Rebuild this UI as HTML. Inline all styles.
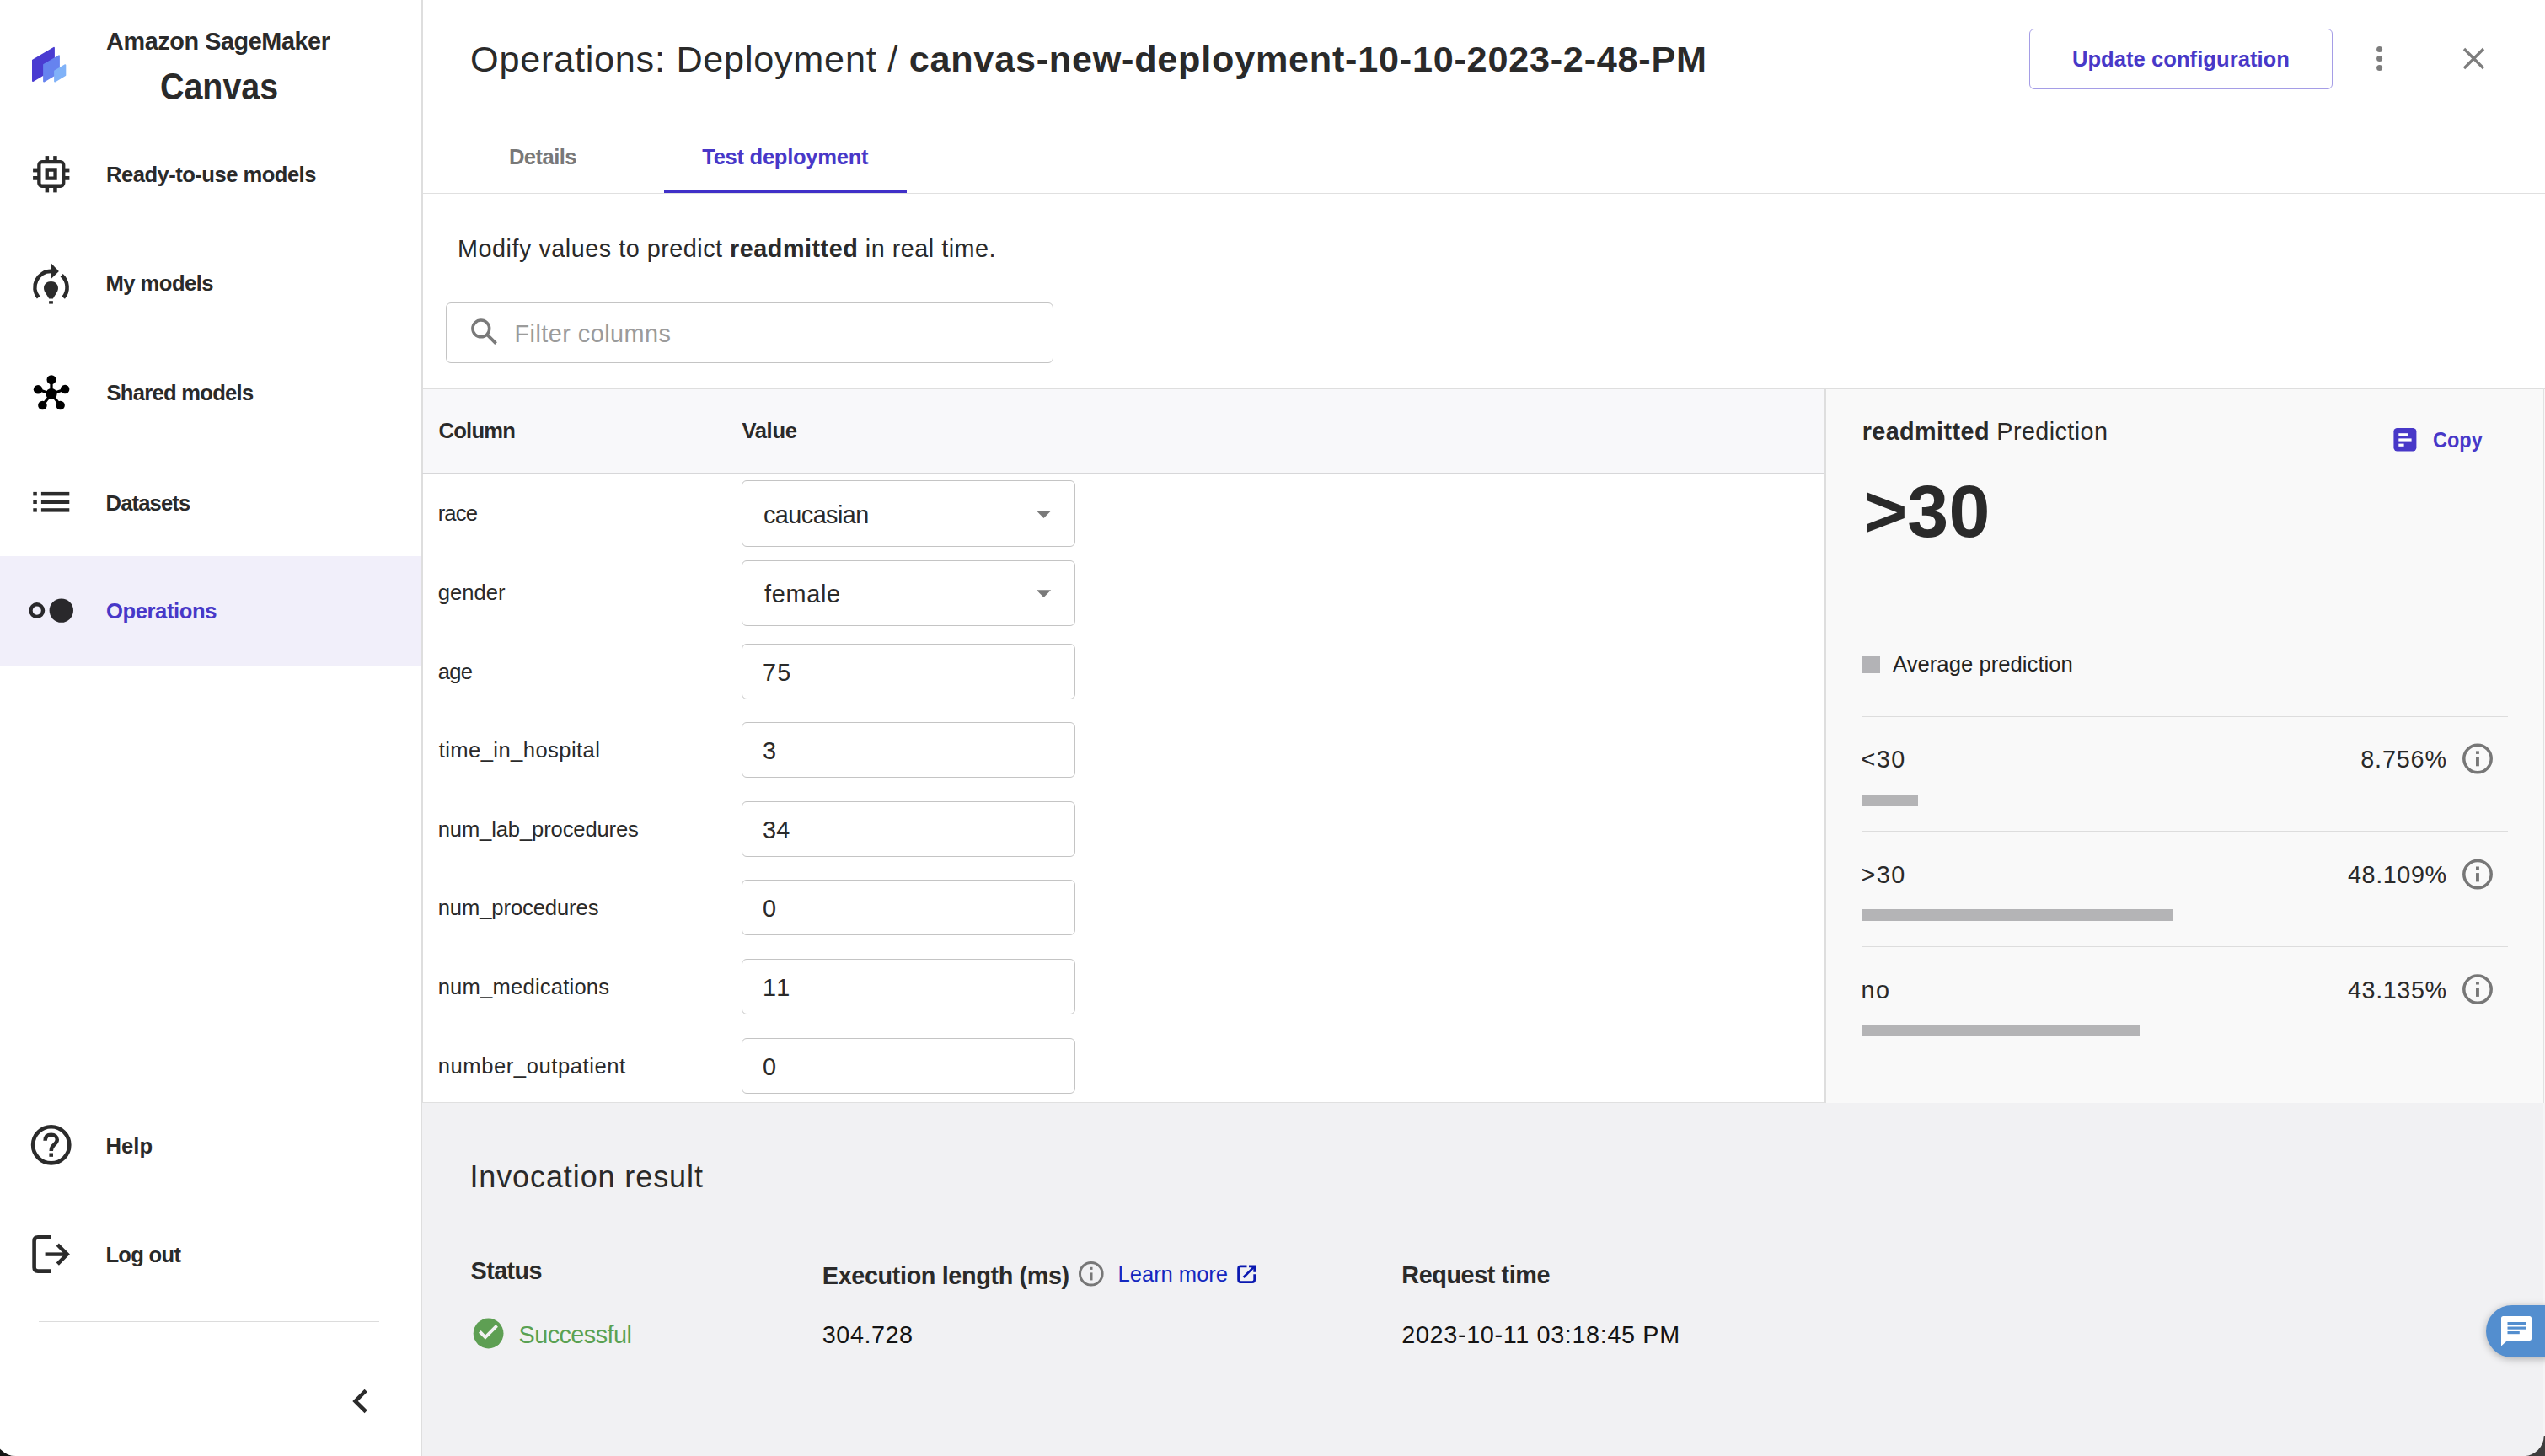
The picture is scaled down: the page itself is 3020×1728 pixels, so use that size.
<!DOCTYPE html><html><head><meta charset='utf-8'><style>
*{margin:0;padding:0;box-sizing:border-box}
html,body{width:3020px;height:1728px;overflow:hidden;background:#fff}
body{position:relative;font-family:"Liberation Sans",sans-serif;color:#2a2a2a}
.a{position:absolute}
.t{position:absolute;white-space:nowrap;line-height:1;font-family:"Liberation Sans",sans-serif}
.t b{font-weight:700}
.box{position:absolute;border:1px solid #c4c4c4;border-radius:6px;background:#fff}
</style></head><body>
<!-- backgrounds -->
<div class="a" style="left:0;top:660px;width:500px;height:130px;background:#f1effa"></div>
<div class="a" style="left:500px;top:0;width:2px;height:1728px;background:#dedede"></div>
<div class="a" style="left:502px;top:142px;width:2520px;height:1px;background:#e0e0e0"></div>
<div class="a" style="left:502px;top:229px;width:2520px;height:1px;background:#e0e0e0"></div>
<div class="a" style="left:788px;top:226px;width:288px;height:3px;background:#4030c8"></div>
<!-- filter input -->
<div class="box" style="left:529px;top:359px;width:721px;height:72px"></div>
<!-- table area -->
<div class="a" style="left:502px;top:460px;width:2520px;height:2px;background:#dedede"></div>
<div class="a" style="left:502px;top:462px;width:1663px;height:99px;background:#f8f8fa"></div>
<div class="a" style="left:501px;top:561px;width:1664px;height:2px;background:#d7d7d9"></div>
<div class="a" style="left:2165px;top:462px;width:855px;height:847px;background:#f9f9f9"></div>
<div class="a" style="left:2165px;top:462px;width:1.5px;height:847px;background:#dedede"></div>
<div class="a" style="left:501px;top:1309px;width:2520px;height:419px;background:#f1f1f3"></div>
<div class="a" style="left:501px;top:1308px;width:1664px;height:1px;background:#e0e0e0"></div>
<div class="a" style="left:3018px;top:461px;width:1px;height:848px;background:#e2e2e2"></div>
<div class="a" style="left:3018px;top:1309px;width:2px;height:419px;background:#f5f5f6"></div>
<!-- selects and inputs -->
<div class="box" style="left:880px;top:570px;width:396px;height:79px"></div>
<div class="box" style="left:880px;top:665px;width:396px;height:78px"></div>
<div class="box" style="left:880px;top:764px;width:396px;height:66px"></div>
<div class="box" style="left:880px;top:857px;width:396px;height:66px"></div>
<div class="box" style="left:880px;top:951px;width:396px;height:66px"></div>
<div class="box" style="left:880px;top:1044px;width:396px;height:66px"></div>
<div class="box" style="left:880px;top:1138px;width:396px;height:66px"></div>
<div class="box" style="left:880px;top:1232px;width:396px;height:66px"></div>
<!-- update config button -->
<div class="a" style="left:2408px;top:34px;width:360px;height:72px;border:1px solid #a59de6;border-radius:6px"></div>
<!-- prediction dividers & bars -->
<div class="a" style="left:2209px;top:849.6px;width:767px;height:1.6px;background:#dddddd"></div>
<div class="a" style="left:2209px;top:985.5px;width:767px;height:1.6px;background:#dddddd"></div>
<div class="a" style="left:2209px;top:1122.7px;width:767px;height:1.6px;background:#dddddd"></div>
<div class="a" style="left:2209px;top:778px;width:22px;height:20.8px;background:#b3b3b6"></div>
<div class="a" style="left:2209px;top:943px;width:66.9px;height:13.9px;background:#b4b4b6"></div>
<div class="a" style="left:2209px;top:1079.3px;width:369px;height:14.2px;background:#b4b4b6"></div>
<div class="a" style="left:2209px;top:1216.2px;width:331px;height:13.5px;background:#b4b4b6"></div>
<!-- sidebar divider -->
<div class="a" style="left:46px;top:1567.6px;width:404px;height:1.6px;background:#dcdcdc"></div>
<!-- chat button -->
<div class="a" style="left:2950px;top:1549.3px;width:100px;height:61.3px;border-radius:31px;background:#538ecf;box-shadow:0 2px 10px rgba(0,0,0,0.28)"></div>
<!-- window corners -->
<svg class="a" style="left:0;top:0" width="3020" height="1728">
<path d="M-5.9 1703.6 A24.4 24.4 0 0 0 18.5 1728 L-6 1728 Z" fill="#151515"/>
<path d="M3018.7 1704 A24.1 24.1 0 0 1 2994.6 1728.1 L3021 1728.1 L3021 1704 Z" fill="#3d3d3d"/>
</svg>

<svg class="a" style="left:0;top:0" width="3020" height="1728" viewBox="0 0 3020 1728">
 <!-- logo -->
 <polygon points="38.9,71.6 64.0,56.8 64.0,81.3 38.9,96.1" fill="#4a3bd1" stroke="#4a3bd1" stroke-width="1.8" stroke-linejoin="round"/>
 <polygon points="52.0,76.8 70.0,66.2 70.0,86.0 52.0,96.6" fill="#6683ef" stroke="#6683ef" stroke-width="1.8" stroke-linejoin="round"/>
 <polygon points="65.0,84.4 77.4,77.1 77.4,89.3 65.0,96.6" fill="#80b2f8" stroke="#80b2f8" stroke-width="1.8" stroke-linejoin="round"/>
 <!-- chip icon -->
 <g fill="none" stroke="#2b2b2b" stroke-width="4.3">
  <rect x="46.35" y="192.15" width="28.9" height="28.6" rx="3.5"/>
 </g>
 <g fill="#2b2b2b">
  <path d="M53.6 199.3 H67.7 V213.75 H53.6 Z M57.9 203.7 V209.4 H63.4 V203.7 Z" fill-rule="evenodd"/>
  <rect x="53.6" y="185.1" width="4.5" height="6"/><rect x="63.2" y="185.1" width="4.5" height="6"/>
  <rect x="53.6" y="222" width="4.5" height="6.4"/><rect x="63.2" y="222" width="4.5" height="6.4"/>
  <rect x="39.1" y="199.6" width="6" height="4.8"/><rect x="39.1" y="209.0" width="6" height="4.75"/>
  <rect x="76.5" y="199.6" width="5.9" height="4.8"/><rect x="76.5" y="209.0" width="5.9" height="4.75"/>
 </g>
 <!-- my models icon -->
 <g fill="none" stroke="#2b2b2b" stroke-width="4.6">
  <path d="M45.67 353.04 A19.1 19.1 0 0 1 60.5 321.9"/>
  <path d="M73.16 326.7 A19.1 19.1 0 0 1 75.17 353.23"/>
 </g>
 <g fill="#2b2b2b">
  <path d="M60.3 312 L69.9 322.1 L60.3 331.3 Z"/>
  <path d="M60.5 334 C65.5 334 69 337.5 69 342 C69 344.5 67.8 346.5 66.5 348.5 L62.8 354.6 H58.2 L54.5 348.5 C53.2 346.5 52 344.5 52 342 C52 337.5 55.5 334 60.5 334 Z"/>
  <rect x="58.1" y="357.2" width="4.8" height="3.4"/>
 </g>
 <!-- shared models icon -->
 <g stroke="#000" stroke-width="3.3">
  <line x1="61" y1="467.5" x2="61" y2="450.7"/><line x1="61" y1="467.5" x2="45.1" y2="462.2"/>
  <line x1="61" y1="467.5" x2="77.1" y2="462"/><line x1="61" y1="467.5" x2="50.4" y2="481"/>
  <line x1="61" y1="467.5" x2="71.6" y2="481"/>
 </g>
 <g fill="#000">
  <circle cx="61" cy="467.5" r="6.6"/><circle cx="61" cy="450.7" r="5.5"/>
  <circle cx="45.1" cy="462.2" r="5.3"/><circle cx="77.1" cy="462" r="5.3"/>
  <circle cx="50.4" cy="481" r="5.3"/><circle cx="71.6" cy="481" r="5.3"/>
 </g>
 <!-- datasets icon -->
 <g fill="#2b2b2b">
  <rect x="39.3" y="583.9" width="4.5" height="4.5"/><rect x="39.3" y="593.6" width="4.5" height="4.4"/><rect x="39.3" y="603.2" width="4.5" height="4.4"/>
  <rect x="48.9" y="583.9" width="33.4" height="4.5"/><rect x="48.9" y="593.6" width="33.4" height="4.4"/><rect x="48.9" y="603.2" width="33.4" height="4.4"/>
 </g>
 <!-- operations icon -->
 <circle cx="43.75" cy="724.6" r="7.28" fill="none" stroke="#29282b" stroke-width="4.45"/>
 <circle cx="72.8" cy="724.6" r="14.2" fill="#29282b"/>
 <!-- help icon -->
 <circle cx="60.7" cy="1358.8" r="21.6" fill="none" stroke="#2b2b2b" stroke-width="4.6"/>
 <path d="M53.6 1353.8 C53.6 1348.6 56.6 1346.8 60.8 1346.8 C65 1346.8 67.8 1349.2 67.8 1352.8 C67.8 1355.6 65.8 1357.2 63.8 1359 C61.8 1360.8 60.7 1362.3 60.7 1365.9" fill="none" stroke="#2b2b2b" stroke-width="4.5"/>
 <rect x="58.4" y="1368.5" width="4.6" height="4.3" fill="#2b2b2b"/>
 <!-- logout icon -->
 <path d="M60.8 1468.4 H45 Q40.6 1468.4 40.6 1472.8 V1504.2 Q40.6 1508.6 45 1508.6 H60.8" fill="none" stroke="#2b2b2b" stroke-width="4.6"/>
 <path d="M53.6 1488.6 H79" fill="none" stroke="#2b2b2b" stroke-width="4.4"/>
 <path d="M69.9 1478.8 L79.7 1488.6 L69.9 1498.5" fill="none" stroke="#2b2b2b" stroke-width="4.5" stroke-linecap="square"/>
 <!-- collapse chevron -->
 <path d="M434.2 1650.3 L421.6 1662.9 L434.2 1675.5" fill="none" stroke="#2b2b2b" stroke-width="4.6"/>
 <!-- kebab and close -->
 <g fill="#7d7d7d"><circle cx="2823.6" cy="58.5" r="3.5"/><circle cx="2823.6" cy="69.5" r="3.5"/><circle cx="2823.6" cy="80.5" r="3.5"/></g>
 <path d="M2924 58 L2947 81 M2947 58 L2924 81" stroke="#7d7d7d" stroke-width="3.3"/>
 <!-- search icon -->
 <circle cx="570.8" cy="389.9" r="9.9" fill="none" stroke="#7a7a7a" stroke-width="3.5"/>
 <path d="M578.6 397.7 L588.6 407.7" stroke="#7a7a7a" stroke-width="3.8"/>
 <!-- dropdown arrows -->
 <path d="M1229.9 606.2 H1247.2 L1238.5 614.9 Z" fill="#7a7a7a"/>
 <path d="M1229.9 700.2 H1247.2 L1238.5 708.9 Z" fill="#7a7a7a"/>
 <!-- copy icon -->
 <rect x="2840.4" y="508.1" width="27" height="27.4" rx="4.2" fill="#4838c8"/>
 <g fill="#fff"><rect x="2846.3" y="514.2" width="10.8" height="3.5"/><rect x="2846.3" y="520.4" width="15.3" height="3.2"/><rect x="2846.3" y="526.6" width="6.3" height="3.2"/></g>
 <!-- info icons -->
 <g fill="none" stroke="#777" stroke-width="3.5">
  <circle cx="2940" cy="900.5" r="16.2"/><circle cx="2940" cy="1037.6" r="16.2"/><circle cx="2940" cy="1174.1" r="16.2"/>
  <circle cx="1294.8" cy="1511.8" r="13.3" stroke-width="3"/>
 </g>
 <g fill="#777">
  <rect x="2938" y="891.4" width="3.9" height="3.5"/><rect x="2938" y="899" width="3.9" height="10.3"/>
  <rect x="2938" y="1028.5" width="3.9" height="3.5"/><rect x="2938" y="1036.1" width="3.9" height="10.3"/>
  <rect x="2938" y="1165" width="3.9" height="3.5"/><rect x="2938" y="1172.6" width="3.9" height="10.3"/>
  <rect x="1293.1" y="1503.8" width="3.4" height="3.1"/><rect x="1293.1" y="1510.4" width="3.4" height="9"/>
 </g>
 <!-- check icon -->
 <circle cx="579.6" cy="1582.5" r="17.9" fill="#5e9f53"/>
 <path d="M569.3 1580.4 L575.9 1587 L589.6 1573.4" fill="none" stroke="#f2f2f3" stroke-width="3.8"/>
 <!-- external link -->
 <path d="M1479.5 1502.9 H1472.4 Q1469.6 1502.9 1469.6 1505.7 V1518.8 Q1469.6 1521.6 1472.4 1521.6 H1485.9 Q1488.7 1521.6 1488.7 1518.8 V1512.3" fill="none" stroke="#0a18b0" stroke-width="2.75"/>
 <path d="M1482 1502.9 H1488.7 V1509.8" fill="none" stroke="#0a18b0" stroke-width="2.75"/>
 <path d="M1475.6 1516 L1488 1503.6" fill="none" stroke="#0a18b0" stroke-width="2.75"/>
 <!-- chat icon -->
 <path d="M2970.5 1562 H3001.5 Q3004 1562 3004 1564.5 V1588.5 Q3004 1591 3001.5 1591 H2975.2 L2968 1597.5 V1564.5 Q2968 1562 2970.5 1562 Z" fill="#fff"/>
 <g fill="#538ecf"><rect x="2975.5" y="1569" width="21.5" height="3.2"/><rect x="2975.5" y="1574.5" width="21.5" height="3.2"/><rect x="2975.5" y="1580" width="14.3" height="3.2"/></g>
</svg>
<div class='t' style='left:126.10px;top:35.00px;font-size:28.8px;font-weight:700;color:#2a2a2a;letter-spacing:-0.417px'>Amazon SageMaker</div>
<div class='t' style='left:189.60px;top:81.20px;font-size:44.0px;font-weight:700;color:#2a2a2a;transform:scaleX(0.8951);transform-origin:0 0'>Canvas</div>
<div class='t' style='left:126.10px;top:194.80px;font-size:25.6px;font-weight:700;color:#2a2a2a;letter-spacing:-0.528px'>Ready-to-use models</div>
<div class='t' style='left:125.50px;top:323.80px;font-size:25.6px;font-weight:700;color:#2a2a2a;letter-spacing:-0.529px'>My models</div>
<div class='t' style='left:126.50px;top:454.00px;font-size:25.6px;font-weight:700;color:#2a2a2a;letter-spacing:-0.729px'>Shared models</div>
<div class='t' style='left:125.50px;top:585.00px;font-size:25.6px;font-weight:700;color:#2a2a2a;letter-spacing:-0.852px'>Datasets</div>
<div class='t' style='left:125.90px;top:713.00px;font-size:25.6px;font-weight:700;color:#4838c8;letter-spacing:-0.386px'>Operations</div>
<div class='t' style='left:125.40px;top:1347.50px;font-size:25.6px;font-weight:700;color:#2a2a2a;letter-spacing:0.091px'>Help</div>
<div class='t' style='left:125.40px;top:1477.40px;font-size:25.6px;font-weight:700;color:#2a2a2a;letter-spacing:-0.697px'>Log out</div>
<div class='t' style='left:558.10px;top:48.90px;font-size:43.2px;font-weight:400;color:#2a2a2a;letter-spacing:0.755px'>Operations: Deployment / <b>canvas-new-deployment-10-10-2023-2-48-PM</b></div>
<div class='t' style='left:2458.90px;top:57.90px;font-size:25.6px;font-weight:700;color:#4838c8;letter-spacing:0.036px'>Update configuration</div>
<div class='t' style='left:603.90px;top:173.70px;font-size:25.6px;font-weight:700;color:#787878;letter-spacing:-0.549px'>Details</div>
<div class='t' style='left:833.20px;top:173.70px;font-size:25.6px;font-weight:700;color:#4838c8;letter-spacing:-0.296px'>Test deployment</div>
<div class='t' style='left:543.10px;top:281.10px;font-size:28.8px;font-weight:400;color:#2a2a2a;letter-spacing:0.499px'>Modify values to predict <b>readmitted</b> in real time.</div>
<div class='t' style='left:610.50px;top:382.00px;font-size:28.8px;font-weight:400;color:#9b9b9b;letter-spacing:0.475px'>Filter columns</div>
<div class='t' style='left:520.60px;top:498.90px;font-size:25.6px;font-weight:700;color:#2a2a2a;letter-spacing:-0.804px'>Column</div>
<div class='t' style='left:880.40px;top:498.90px;font-size:25.6px;font-weight:700;color:#2a2a2a;letter-spacing:-0.334px'>Value</div>
<div class='t' style='left:519.70px;top:597.30px;font-size:25.6px;font-weight:400;color:#2a2a2a;letter-spacing:-0.851px'>race</div>
<div class='t' style='left:906.00px;top:596.50px;font-size:28.8px;font-weight:400;color:#2a2a2a;letter-spacing:-0.544px'>caucasian</div>
<div class='t' style='left:519.70px;top:691.30px;font-size:25.6px;font-weight:400;color:#2a2a2a;letter-spacing:0.026px'>gender</div>
<div class='t' style='left:907.00px;top:690.50px;font-size:28.8px;font-weight:400;color:#2a2a2a;letter-spacing:0.717px'>female</div>
<div class='t' style='left:519.70px;top:784.80px;font-size:25.6px;font-weight:400;color:#2a2a2a;letter-spacing:-0.734px'>age</div>
<div class='t' style='left:905.00px;top:784.00px;font-size:28.8px;font-weight:400;color:#2a2a2a;letter-spacing:1.185px'>75</div>
<div class='t' style='left:520.70px;top:877.50px;font-size:25.6px;font-weight:400;color:#2a2a2a;letter-spacing:0.415px'>time_in_hospital</div>
<div class='t' style='left:905.00px;top:876.70px;font-size:28.8px;font-weight:400;color:#2a2a2a;letter-spacing:0.000px'>3</div>
<div class='t' style='left:519.70px;top:971.80px;font-size:25.6px;font-weight:400;color:#2a2a2a;letter-spacing:-0.133px'>num_lab_procedures</div>
<div class='t' style='left:905.00px;top:971.00px;font-size:28.8px;font-weight:400;color:#2a2a2a;letter-spacing:0.185px'>34</div>
<div class='t' style='left:519.70px;top:1065.10px;font-size:25.6px;font-weight:400;color:#2a2a2a;letter-spacing:-0.098px'>num_procedures</div>
<div class='t' style='left:905.00px;top:1064.30px;font-size:28.8px;font-weight:400;color:#2a2a2a;letter-spacing:0.000px'>0</div>
<div class='t' style='left:519.70px;top:1158.80px;font-size:25.6px;font-weight:400;color:#2a2a2a;letter-spacing:0.201px'>num_medications</div>
<div class='t' style='left:905.00px;top:1158.00px;font-size:28.8px;font-weight:400;color:#2a2a2a;letter-spacing:2.422px'>11</div>
<div class='t' style='left:519.70px;top:1252.60px;font-size:25.6px;font-weight:400;color:#2a2a2a;letter-spacing:0.567px'>number_outpatient</div>
<div class='t' style='left:905.00px;top:1251.80px;font-size:28.8px;font-weight:400;color:#2a2a2a;letter-spacing:0.000px'>0</div>
<div class='t' style='left:2209.70px;top:498.10px;font-size:28.8px;font-weight:400;color:#2a2a2a;letter-spacing:0.397px'><b>readmitted</b> Prediction</div>
<div class='t' style='left:2886.98px;top:510.10px;font-size:25.6px;font-weight:700;color:#4838c8;transform:scaleX(0.9192);transform-origin:0 0'>Copy</div>
<div class='t' style='left:2211.90px;top:562.70px;font-size:88.0px;font-weight:700;color:#2a2a2a;letter-spacing:0.084px'>&gt;30</div>
<div class='t' style='left:2246.00px;top:775.90px;font-size:25.6px;font-weight:400;color:#232323;letter-spacing:0.052px'>Average prediction</div>
<div class='t' style='left:2208.50px;top:886.90px;font-size:28.8px;font-weight:400;color:#2a2a2a;letter-spacing:1.484px'>&lt;30</div>
<div class='t' style='left:2801.20px;top:886.90px;font-size:28.8px;font-weight:400;color:#2a2a2a;letter-spacing:0.847px'>8.756%</div>
<div class='t' style='left:2208.50px;top:1024.20px;font-size:28.8px;font-weight:400;color:#2a2a2a;letter-spacing:1.484px'>&gt;30</div>
<div class='t' style='left:2786.00px;top:1024.20px;font-size:28.8px;font-weight:400;color:#2a2a2a;letter-spacing:0.570px'>48.109%</div>
<div class='t' style='left:2208.50px;top:1160.70px;font-size:28.8px;font-weight:400;color:#2a2a2a;letter-spacing:1.485px'>no</div>
<div class='t' style='left:2786.00px;top:1160.70px;font-size:28.8px;font-weight:400;color:#2a2a2a;letter-spacing:0.570px'>43.135%</div>
<div class='t' style='left:557.40px;top:1378.90px;font-size:36.0px;font-weight:400;color:#2a2a2a;letter-spacing:0.897px'>Invocation result</div>
<div class='t' style='left:558.60px;top:1494.10px;font-size:28.8px;font-weight:700;color:#2a2a2a;letter-spacing:-0.618px'>Status</div>
<div class='t' style='left:975.80px;top:1499.50px;font-size:28.8px;font-weight:700;color:#2a2a2a;letter-spacing:-0.370px'>Execution length (ms)</div>
<div class='t' style='left:1326.60px;top:1500.30px;font-size:25.6px;font-weight:400;color:#1428c0;letter-spacing:-0.050px'>Learn more</div>
<div class='t' style='left:1663.30px;top:1498.90px;font-size:28.8px;font-weight:700;color:#2a2a2a;letter-spacing:-0.428px'>Request time</div>
<div class='t' style='left:615.60px;top:1570.20px;font-size:28.8px;font-weight:400;color:#5aa152;letter-spacing:-0.561px'>Successful</div>
<div class='t' style='left:975.80px;top:1570.00px;font-size:28.8px;font-weight:400;color:#141414;letter-spacing:0.537px'>304.728</div>
<div class='t' style='left:1663.30px;top:1570.20px;font-size:28.8px;font-weight:400;color:#141414;letter-spacing:0.640px'>2023-10-11 03:18:45 PM</div></body></html>
